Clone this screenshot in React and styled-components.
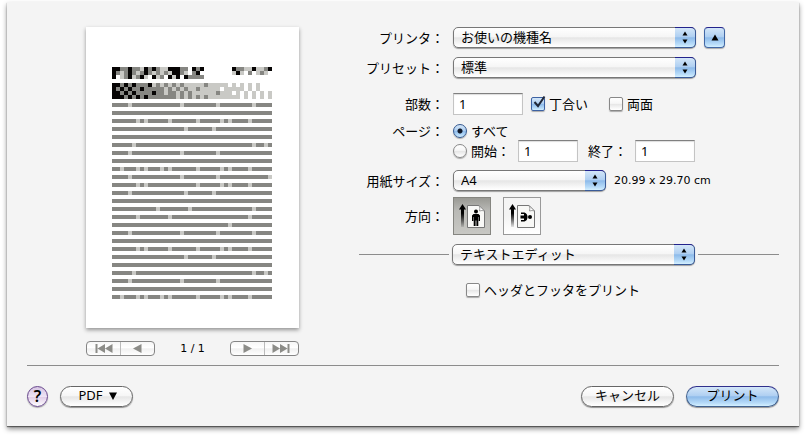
import React, { useState } from "react";
import styled, { createGlobalStyle, css } from "styled-components";

const GlobalStyle = createGlobalStyle`
  * { box-sizing: border-box; }
  body {
    margin: 0;
    background: #fff;
    color: #000;
    font: 13px/18px "Noto Sans", "Noto Sans CJK JP", sans-serif;
  }
  button, input, select { font: inherit; color: inherit; margin: 0; }
`;

const silver = "linear-gradient(#fff 0%, #f6f6f6 45%, #e6e6e6 52%, #fbfbfb 90%, #fff 100%)";
const aqua = "linear-gradient(#d3e6f8 0%, #b0d0f2 45%, #8ebbea 52%, #b8dcf9 85%, #d4f0ff 100%)";

const Window = styled.main`
  padding: 2px 7px 11px;
`;

const Dialog = styled.form`
  background: #f4f4f4;
  padding: 25px 20px 19px;
  box-shadow: 0 1px 1px rgba(0, 0, 0, 0.45), 0 3px 5px rgba(0, 0, 0, 0.45);
`;

const Content = styled.div`
  display: flex;
  gap: 60px;
  padding: 0 0 9px 59px;
`;

const PreviewPane = styled.section`
  flex: none;
  width: 213px;
`;

const Paper = styled.div`
  background: #fff;
  padding: 40px 26px 29px;
  box-shadow: 0 2px 4px rgba(0, 0, 0, 0.4);
  svg { display: block; width: 100%; height: auto; }
`;

const Pager = styled.div`
  display: flex;
  justify-content: space-between;
  align-items: center;
  margin-top: 13px;
  height: 15px;
  font-family: "DejaVu Sans", sans-serif;
  font-size: 11px;
`;

const PagerGroup = styled.div`
  display: flex;
  width: 69px;
  height: 15px;
  border: 1px solid #858585;
  border-radius: 4px;
  background: linear-gradient(#f6f6f6, #fff 45%, #f0f0f0 52%, #fff);
  overflow: hidden;
`;

const PagerButton = styled.button`
  flex: 1;
  display: grid;
  place-items: center;
  padding: 0;
  border: 0;
  background: none;
  & + & { border-left: 1px solid #bbb; }
  svg { display: block; fill: #8c8c88; }
`;

const Settings = styled.section`
  flex: 1;
  min-width: 0;
`;

const Row = styled.div`
  display: grid;
  grid-template-columns: 85px 1fr;
  column-gap: 9px;
  align-items: ${(p) => (p.$top ? "start" : "center")};
  margin-bottom: ${(p) => p.$gap}px;
`;

const Caption = styled.label`
  text-align: right;
  white-space: nowrap;
`;

const Controls = styled.div`
  display: flex;
  align-items: center;
  gap: 8px;
  white-space: nowrap;
`;

const PageChoices = styled.div`
  display: flex;
  flex-direction: column;
`;

const SelectFrame = styled.div`
  position: relative;
  flex: none;
  width: ${(p) => (p.$narrow ? 153 : 243)}px;
  height: 21px;
  border-radius: 5px;
  box-shadow: 0 1px 1px rgba(0, 0, 0, 0.35);
`;

const Select = styled.select`
  display: block;
  appearance: none;
  width: 100%;
  height: 21px;
  padding: 0 24px 2px 7px;
  line-height: 18px;
  border: 1px solid #777;
  border-radius: 5px;
  background: ${silver};
`;

const SelectCap = styled.span`
  position: absolute;
  inset: 0 0 0 auto;
  width: 21px;
  display: grid;
  place-items: center;
  border: 1px solid #3a5b98;
  border-top-color: #23238c;
  border-left: 0;
  border-radius: 0 5px 5px 0;
  background: ${aqua};
  pointer-events: none;
`;

const DisclosureButton = styled.button`
  width: 21px;
  height: 21px;
  display: grid;
  place-items: center;
  padding: 0;
  border: 1px solid #4167a5;
  border-top-color: #23238c;
  border-radius: 4px;
  background: ${aqua};
  box-shadow: 0 1px 1px rgba(0, 0, 0, 0.3);
`;

const TextField = styled.input`
  width: ${(p) => (p.$wide ? 70 : 60)}px;
  height: 22px;
  padding: 0 5px;
  border: 1px solid #c4c4c4;
  border-top-color: #808080;
  border-radius: 0;
  background: #fff;
  box-shadow: inset 0 1px 1px #ddd;
  font-family: "Noto Sans", sans-serif;
`;

const Choice = styled.label`
  display: inline-flex;
  align-items: center;
  gap: 4px;
`;

const Tick = styled.input`
  appearance: none;
  display: block;
  width: 14px;
  height: 14px;
  border: 1px solid #888;
  border-radius: 2px;
  background: ${silver};
  box-shadow: 0 1px 1px rgba(0, 0, 0, 0.3);
  &:checked { border-color: #3d62a3; background: ${aqua}; }
`;

const TickBox = styled.span`
  position: relative;
  display: block;
  height: 14px;
  svg { position: absolute; left: 2px; bottom: 2px; pointer-events: none; }
`;

const Radio = styled.input`
  appearance: none;
  width: 14px;
  height: 14px;
  border: 1px solid #888;
  border-radius: 50%;
  background: ${silver};
  box-shadow: 0 1px 1px rgba(0, 0, 0, 0.3);
  &:checked {
    border-color: #34588f;
    background: radial-gradient(circle, #101828 0 2px, transparent 3px), ${aqua};
  }
`;

const PageLine = styled.div`
  display: flex;
  align-items: center;
  gap: 8px;
  white-space: nowrap;
`;

const EndLabel = styled.label`
  padding-left: 2px;
`;

const TwoSided = styled(Choice)`
  margin-left: 13px;
`;

const PaperSize = styled.span`
  font-family: "DejaVu Sans", sans-serif;
  font-size: 11px;
`;

const Orientations = styled.div`
  display: flex;
  gap: 12px;
`;

const OrientationButton = styled.button`
  width: 38px;
  height: 38px;
  padding: 0;
  border: 1px solid #999;
  background: linear-gradient(#f4f4f4 50%, #fff);
  ${(p) => p.$active && css`
    border-color: #858580;
    background: linear-gradient(#999994, #b9b9b5 35%, #c8c8c4);
  `}
  svg { display: block; }
`;

const SectionSwitch = styled.div`
  display: flex;
  align-items: center;
  gap: 3px;
  margin-bottom: 16px;
`;

const Rule = styled.span`
  height: 1px;
  background: #8c8c8c;
  width: 90px;
  &:last-child { width: auto; flex: 1; }
`;

const SectionOptions = styled.div`
  padding-left: 107px;
`;

const Separator = styled.hr`
  height: 1px;
  margin: 0 0 20px;
  border: 0;
  background: #8c8c8c;
`;

const Footer = styled.footer`
  display: flex;
  align-items: center;
  gap: 12px;
`;

const HelpButton = styled.button`
  width: 21px;
  height: 21px;
  padding: 0;
  line-height: 19px;
  font-size: 16px;
  font-weight: 600;
  border: 1px solid #68478d;
  border-radius: 50%;
  background: linear-gradient(#d6c4e3, #eee4f4 50%, #e2cfe9 55%, #fff);
  box-shadow: 0 1px 1px rgba(0, 0, 0, 0.3);
`;

const PushButton = styled.button`
  min-width: ${(p) => (p.$small ? 73 : 93)}px;
  height: 21px;
  padding: 0 8px 2px;
  line-height: 17px;
  border: 1px solid #666;
  border-radius: 11px;
  background: ${silver};
  box-shadow: 0 1px 1px rgba(0, 0, 0, 0.4);
  ${(p) => p.$primary && css`
    border-color: #40608e;
    border-top-color: #30308c;
    background: ${aqua};
  `}
`;

const PdfContent = styled.span`
  display: inline-flex;
  align-items: center;
  gap: 6px;
  padding-left: 2px;
`;

const Spacer = styled.span`
  flex: 1;
`;

const HEADING = [
  "KKggKggLKgKgLLKKKggWKgKWWWWWWWKggLLKLLgK",
  "KgLgKgLgKgLgLgLKKgLWgKWWWWWWWWLKLWgWLgLW",
  "KWLgKLgKLWKLgWKLKWKggggWWWWWWWWWWWWWWWWW",
  "WWWWWWWWWWWWWWWWWWWWWWWWWWWWWWWWWWWWWWWW",
  "KKgKgKgggKLgLgLgLgLLLLLgLLLLLWLWLWLWLWWW",
  "KgKgKggKgggggLgLgLgLLgLLLLLWLLLLLWLWLWWW",
  "KKgKgKggggKggLggLgLgLLLLLLgLLLWLWLWLWLWL",
  "KKKgKgKgKgggggggLgLgLgLgLLLLLLLLWLWLWLWL",
];

// Columns of the lighter cells in each text line.
const LINES = [
  [4, 17, 26, 35], [], [6, 8, 14, 21, 27, 29, 34], [18, 25], [], [5, 35, 38],
  [4, 17, 26], [], [2, 6, 8, 12, 14, 21, 27, 29, 34], [4, 17, 26, 39],
  [6, 8, 21, 27, 29, 34], [4, 18, 25], [], [11, 19, 35], [6, 14, 34], [29],
  [4, 17, 26, 35], [], [6, 8, 14, 21, 27, 29, 34], [18, 25], [], [5, 35, 38],
  [4, 17, 26], [], [2, 6, 8, 12, 14, 21, 27, 29, 34],
];
const INK = { K: "#060404", g: "#868682", L: "#c9c9c5" };

function DocumentPreview() {
  return (
    <svg viewBox="0 0 161 232" shapeRendering="crispEdges" role="img" aria-label="プレビュー">
      {HEADING.flatMap((row, y) =>
        [...row].map((c, x) =>
          INK[c] ? <rect key={`${x}-${y}`} x={x * 4} y={y * 4} width="4" height="4" fill={INK[c]} /> : null
        )
      )}
      {LINES.map((gaps, i) => (
        <g key={i}>
          <rect x="0" y={36 + i * 8} width="160" height="4" fill={INK.g} />
          {gaps.map((x) => (
            <rect key={x} x={x * 4} y={36 + i * 8} width="4" height="4" fill={INK.L} />
          ))}
        </g>
      ))}
    </svg>
  );
}

function PopUp({ id, label, value, narrow }) {
  return (
    <SelectFrame $narrow={narrow}>
      <Select id={id} aria-label={label} defaultValue={value}>
        <option>{value}</option>
      </Select>
      <SelectCap>
        <svg width="6" height="13" viewBox="0 0 6 13">
          <path d="M3 0.5 5.5 4.5H0.5ZM0.5 8.5H5.5L3 12.5Z" />
        </svg>
      </SelectCap>
    </SelectFrame>
  );
}

function CheckBox({ children, as: Wrapper = Choice, checked }) {
  const [on, setOn] = useState(Boolean(checked));
  return (
    <Wrapper>
      <TickBox>
        <Tick type="checkbox" checked={on} onChange={() => setOn(!on)} />
        {on && (
          <svg width="13" height="14" viewBox="0 0 13 14">
            <path d="M1.5 7 5 11 11.5 1.5" fill="none" stroke="#202838" strokeWidth="2" />
          </svg>
        )}
      </TickBox>
      {children}
    </Wrapper>
  );
}

function OrientationIcon({ id, sideways }) {
  return (
    <svg width="36" height="36" viewBox="0 0 36 36">
      <defs>
        <linearGradient id={id} x1="0" y1="0" x2="0" y2="1">
          <stop offset="0.4" stopColor="#000" />
          <stop offset="1" stopColor="#000" stopOpacity="0.1" />
        </linearGradient>
      </defs>
      <path d="M8.5 6 12 11.5H10V29H7V11.5H5Z" fill={`url(#${id})`} />
      <path d="M13.5 7.5H25L30.5 13V29.5H13.5Z" fill="#f8f8f6" stroke="#777" />
      <path d="M25 7.5Q26.5 10 25.5 13Q28 12 30.5 13Z" fill="#fff" stroke="#888" strokeWidth="0.8" />
      {sideways ? (
        <>
          <circle cx="26" cy="19" r="2" />
          <path d="M17 14.500H20.500Q23.500 15.500 23.500 19T20.500 23.500H17V22H20V20.500H16.500V17.500H20V16H17Z" />
        </>
      ) : (
        <>
          <circle cx="22" cy="13.500" r="2" />
          <path d="M19.500 16H24.500L26 17.500V23H24.700V19H24.300V28H22.400V22.500H21.600V28H19.700V19H19.300V23H18V17.500Z" />
        </>
      )}
    </svg>
  );
}

export default function App() {
  const [range, setRange] = useState("all");
  const [landscape, setLandscape] = useState(false);
  return (
    <Window>
      <GlobalStyle />
      <Dialog onSubmit={(e) => e.preventDefault()}>
        <Content>
          <PreviewPane>
            <Paper><DocumentPreview /></Paper>
            <Pager>
              <PagerGroup>
                <PagerButton type="button" aria-label="最初のページ">
                  <svg width="18" height="9" viewBox="0 0 18 9"><path d="M0.5 0H2.5V9H0.5ZM10 0V9L2.5 4.5ZM17.5 0V9L10 4.5Z" /></svg>
                </PagerButton>
                <PagerButton type="button" aria-label="前のページ">
                  <svg width="9" height="9" viewBox="0 0 9 9"><path d="M8.5 0V9L0 4.5Z" /></svg>
                </PagerButton>
              </PagerGroup>
              <span>1 / 1</span>
              <PagerGroup>
                <PagerButton type="button" aria-label="次のページ">
                  <svg width="9" height="9" viewBox="0 0 9 9"><path d="M0.5 0V9L9 4.5Z" /></svg>
                </PagerButton>
                <PagerButton type="button" aria-label="最後のページ">
                  <svg width="18" height="9" viewBox="0 0 18 9"><path d="M15.5 0H17.5V9H15.5ZM0.5 0V9L8 4.5ZM8 0V9L15.5 4.5Z" /></svg>
                </PagerButton>
              </PagerGroup>
            </Pager>
          </PreviewPane>

          <Settings>
            <Row $gap={9}>
              <Caption htmlFor="printer">プリンタ：</Caption>
              <Controls>
                <PopUp id="printer" value="お使いの機種名" />
                <DisclosureButton type="button" aria-label="詳細を隠す">
                  <svg width="8" height="7" viewBox="0 0 8 7"><path d="M4 0.5 7.5 6.5H0.5Z" /></svg>
                </DisclosureButton>
              </Controls>
            </Row>
            <Row $gap={15}>
              <Caption htmlFor="preset">プリセット：</Caption>
              <PopUp id="preset" value="標準" />
            </Row>
            <Row $gap={7}>
              <Caption htmlFor="copies">部数：</Caption>
              <Controls>
                <TextField id="copies" $wide defaultValue="1" />
                <CheckBox checked>丁合い</CheckBox>
                <CheckBox as={TwoSided}>両面</CheckBox>
              </Controls>
            </Row>
            <Row $gap={8} $top>
              <Caption as="span">ページ：</Caption>
              <PageChoices role="radiogroup" aria-label="ページ">
                <PageLine>
                  <Choice>
                    <Radio type="radio" name="range" checked={range === "all"} onChange={() => setRange("all")} />
                    すべて
                  </Choice>
                </PageLine>
                <PageLine>
                  <Choice>
                    <Radio type="radio" name="range" checked={range === "some"} onChange={() => setRange("some")} />
                    開始：
                  </Choice>
                  <TextField aria-label="開始" defaultValue="1" />
                  <EndLabel htmlFor="end">終了：</EndLabel>
                  <TextField id="end" defaultValue="1" />
                </PageLine>
              </PageChoices>
            </Row>
            <Row $gap={6}>
              <Caption htmlFor="size">用紙サイズ：</Caption>
              <Controls>
                <PopUp id="size" value="A4" narrow />
                <PaperSize>20.99 x 29.70 cm</PaperSize>
              </Controls>
            </Row>
            <Row $gap={9}>
              <Caption as="span">方向：</Caption>
              <Orientations>
                <OrientationButton type="button" aria-label="縦" aria-pressed={!landscape} $active={!landscape} onClick={() => setLandscape(false)}>
                  <OrientationIcon id="arrow-portrait" />
                </OrientationButton>
                <OrientationButton type="button" aria-label="横" aria-pressed={landscape} $active={landscape} onClick={() => setLandscape(true)}>
                  <OrientationIcon id="arrow-landscape" sideways />
                </OrientationButton>
              </Orientations>
            </Row>
            <SectionSwitch>
              <Rule />
              <PopUp id="section" label="設定項目" value="テキストエディット" />
              <Rule />
            </SectionSwitch>
            <SectionOptions>
              <CheckBox>ヘッダとフッタをプリント</CheckBox>
            </SectionOptions>
          </Settings>
        </Content>
        <Separator />
        <Footer>
          <HelpButton type="button" aria-label="ヘルプ">?</HelpButton>
          <PushButton type="button" $small>
            <PdfContent>
              PDF
              <svg width="8" height="8" viewBox="0 0 8 8"><path d="M0 0.5H8L4 8Z" /></svg>
            </PdfContent>
          </PushButton>
          <Spacer />
          <PushButton type="button">キャンセル</PushButton>
          <PushButton type="submit" $primary>プリント</PushButton>
        </Footer>
      </Dialog>
    </Window>
  );
}
